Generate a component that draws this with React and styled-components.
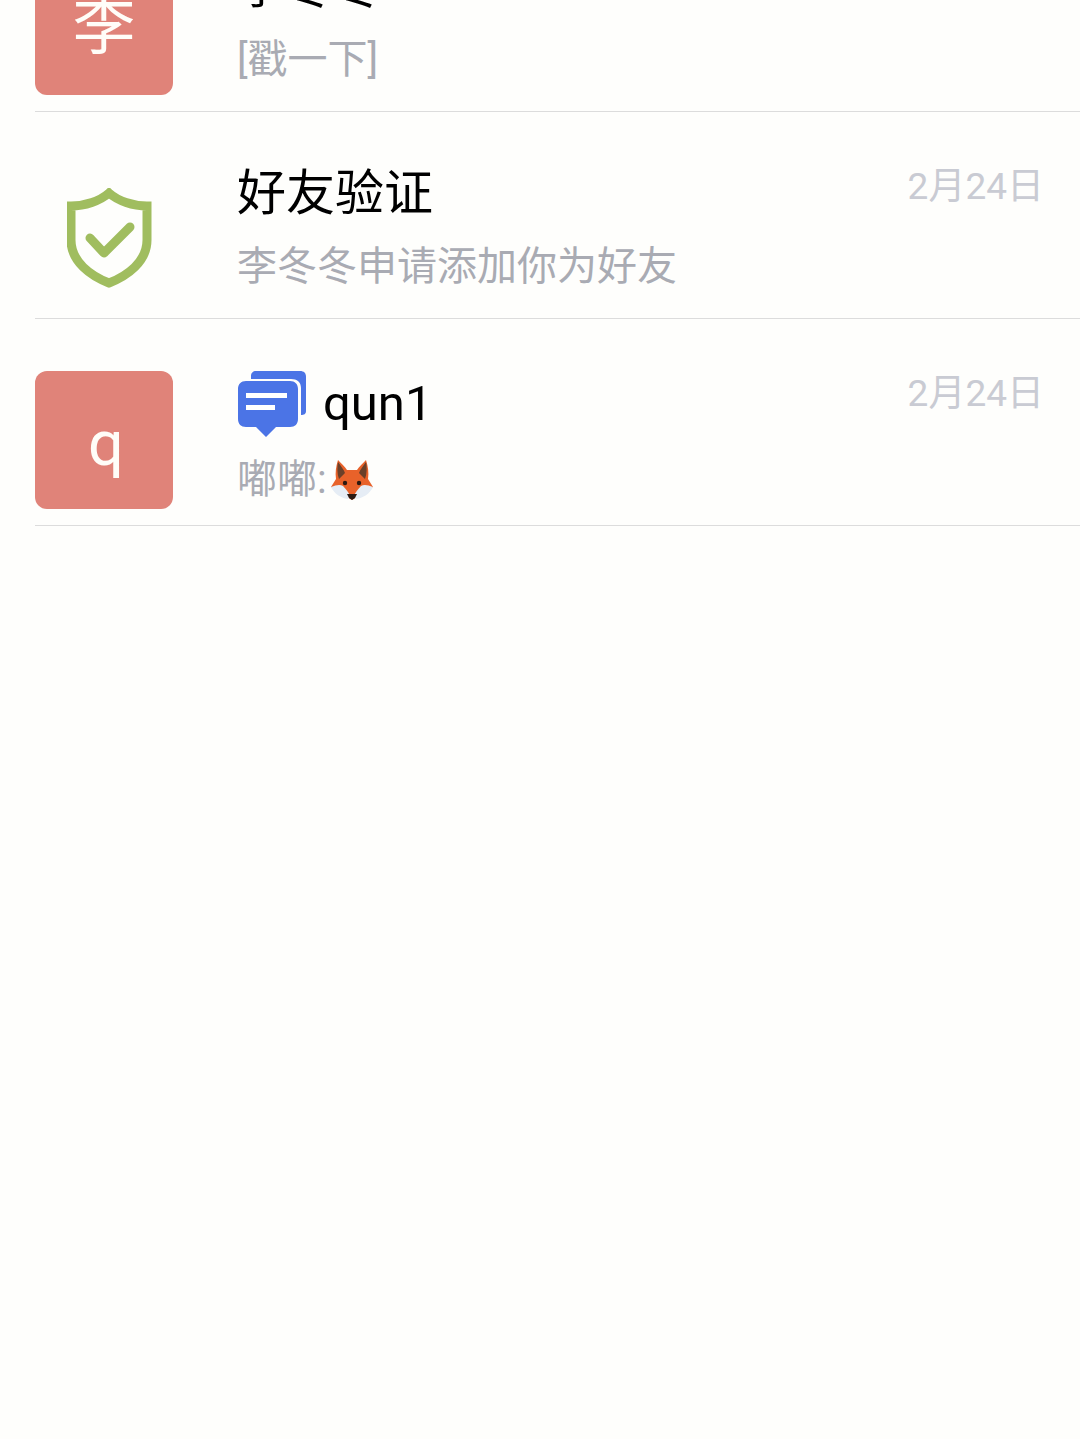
import React from "react";
import styled, { createGlobalStyle } from "styled-components";

const Global = createGlobalStyle`
  html, body { margin: 0; padding: 0; background: #fefefc; height: 100%; overflow: hidden; }
  #root { height: 100%; }
`;
const FONT = `Roboto, "Noto Sans CJK SC", sans-serif`;
const Page = styled.div`
  width: 1080px; height: 1439px; overflow: hidden; background: #fefefc; font-family: ${FONT};
`;
const List = styled.ul`
  list-style: none; margin: -95px 0 0; padding: 0 0 0 35px;
`;
const Row = styled.li`
  box-sizing: border-box; height: 207px; padding: 52px 36px 0 0; border-bottom: 1px solid #dcdcdc;
  display: grid; grid-template-columns: 138px 1fr auto; column-gap: 65px; align-items: start;
`;
const Avatar = styled.div`
  box-sizing: border-box; width: 138px; height: 138px; padding: ${p => p.$dy || 0}px 0 0 ${p => p.$dx || 0}px; border-radius: 12px;
  background: #e08379; color: #fffdf8;
  display: flex; align-items: center; justify-content: center; font-size: 63px; line-height: 1;
`;
const IconSlot = styled.div`
  width: 138px; height: 138px; display: flex; align-items: center; justify-content: center;
`;
const Body = styled.div`display: flex; flex-direction: column; min-width: 0; margin-top: ${p => (p.$group ? 0 : -1)}px;`;
const Title = styled.div`
  display: flex; align-items: center; gap: 17px; height: ${p => (p.$group ? 66 : 62)}px;
  font-size: 49px; line-height: 62px; color: #000; margin-left: -1px;
`;
const Preview = styled.div`
  display: flex; align-items: center; height: 52px; margin-top: ${p => (p.$group ? 17 : 16)}px;
  font-size: 40px; line-height: 52px; color: #a9abb3; white-space: nowrap; margin-left: -1px;
`;
const DateText = styled.div`
  font-size: 37px; line-height: 45px; color: #c9cbd3;
`;

const Shield = () => (
  <svg width="86" height="100" viewBox="0 0 86 100" style={{ marginLeft: 12, marginTop: 10 }}>
    <path d="M42 5C33 13 18 18 4 18V52C4 74 24 88 42 95C60 88 80 74 80 52V18C66 18 51 13 42 5Z" fill="none" stroke="#a0bd5f" strokeWidth="9" />
    <path d="M23 50L37 65L63 39" fill="none" stroke="#a0bd5f" strokeWidth="9" strokeLinecap="round" strokeLinejoin="round" />
  </svg>
);
const GroupIcon = () => (
  <svg width="68" height="66" viewBox="0 0 68 66" style={{ marginLeft: 1 }}>
    <path d="M13 8V5C13 2 15 0 18 0H62C66 0 68 2 68 6V40C68 43 66 44 63 44V17C63 11 59 8 53 8Z" fill="#4b74e6" />
    <path d="M8 10H52C57 10 60 13 60 18V48C60 53 57 56 52 56H38L28 66L18 56H8C3 56 0 53 0 48V18C0 13 3 10 8 10Z" fill="#4b74e6" />
    <rect x="8" y="22" width="41" height="5" fill="#fff" />
    <rect x="8" y="34" width="29" height="5" fill="#fff" />
  </svg>
);
const Fox = () => (
  <svg width="42" height="40" viewBox="0 0 42 40" style={{ marginLeft: 4 }}>
    <path d="M7 0C10 3 14 7 16 10H26C28 7 32 3 35 0C37 6 38 13 37 19L42 27L21 40L0 27L5 19C4 13 5 6 7 0Z" fill="#e8622a" />
    <path d="M7 2C10 6 13 10 14 13L8 19C6 14 6 7 7 2ZM35 2C32 6 29 10 28 13L34 19C36 14 36 7 35 2Z" fill="#6b4029" />
    <path d="M0 27C5 25 9 24 12 26C15 29 18 33 19 36L17 39C9 38 3 33 0 27Z" fill="#e6edf5" />
    <path d="M42 27C37 25 33 24 30 26C27 29 24 33 23 36L25 39C33 38 39 33 42 27Z" fill="#e6edf5" />
    <circle cx="14" cy="23" r="2.2" fill="#2b1a12" />
    <circle cx="28" cy="23" r="2.2" fill="#2b1a12" />
    <path d="M16 34H26L24 38L21 40L18 38Z" fill="#2b1a12" />
  </svg>
);

const App = () => (
  <Page>
    <Global />
    <List>
      <Row>
        <Avatar>李</Avatar>
        <Body>
          <Title>李冬冬</Title>
          <Preview>[戳一下]</Preview>
        </Body>
      </Row>
      <Row>
        <IconSlot><Shield /></IconSlot>
        <Body>
          <Title>好友验证</Title>
          <Preview>李冬冬申请添加你为好友</Preview>
        </Body>
        <DateText>2月24日</DateText>
      </Row>
      <Row>
        <Avatar $dx={4} $dy={7}>q</Avatar>
        <Body $group>
          <Title $group><GroupIcon />qun1</Title>
          <Preview $group>嘟嘟:<Fox /></Preview>
        </Body>
        <DateText>2月24日</DateText>
      </Row>
    </List>
  </Page>
);
export default App;
